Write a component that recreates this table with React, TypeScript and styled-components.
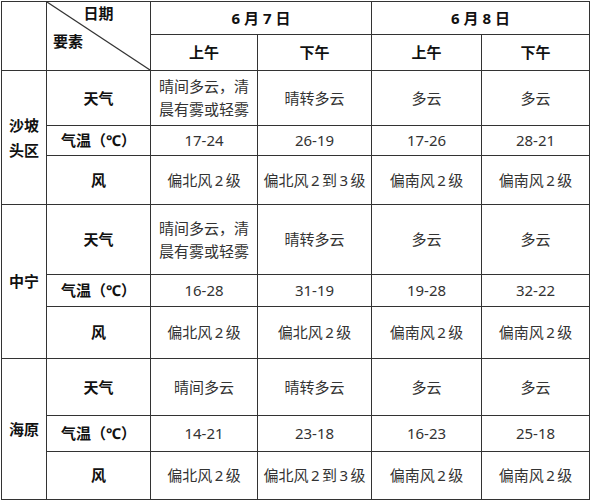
import React from "react";
import styled, { createGlobalStyle } from "styled-components";

const Global = createGlobalStyle`
  html, body { margin: 0; padding: 0; background: #fff; }
  body { font-family: "Noto Sans", "Noto Sans CJK SC", sans-serif; }
`;

const Wrap = styled.div`
  padding: 1px 0 0 1px;
`;

const Table = styled.table`
  border-collapse: collapse;
  table-layout: fixed;
  width: 588px;
  font-size: 15px;
  color: #333;
`;

const Cell = styled.td<{ $bold?: boolean }>`
  border: 1.5px solid #333;
  padding: 0;
  text-align: center;
  vertical-align: middle;
  line-height: 23px;
  font-weight: ${(p) => (p.$bold ? 700 : 400)};
  color: ${(p) => (p.$bold ? "#111" : "#333")};
`;

const Region = styled(Cell)`
  line-height: 25px;
`;

const CornerCell = styled(Cell)`
  position: relative;
`;

const Diagonal = styled.svg`
  position: absolute;
  inset: 0;
  width: 100%;
  height: 100%;
  pointer-events: none;
`;

const CornerLabels = styled.div`
  position: relative;
  display: flex;
  flex-direction: column;
  gap: 8px;
  padding-top: 1px;
  height: 68px;
  box-sizing: border-box;
  line-height: 20px;
  font-weight: 700;
  color: #111;
`;

const TopLabel = styled.span`
  align-self: center;
`;

const LeftLabel = styled.span`
  align-self: flex-start;
  padding-left: 6px;
`;

const Row = styled.tr<{ $h: number }>`
  height: ${(p) => p.$h}px;
`;

const widths = [45, 104, 107, 114, 110, 108];

type Block = {
  name: React.ReactNode;
  heights: [number, number, number];
  weather: string[];
  temp: string[];
  wind: string[];
};

const N = "\u2009";
const w2 = (d: string) => `偏${d}风${N}2${N}级`;
const w23 = `偏北风${N}2${N}到${N}3${N}级`;

const blocks: Block[] = [
  {
    name: (
      <>
        沙坡
        <br />
        头区
      </>
    ),
    heights: [55, 30, 49],
    weather: ["晴间多云，清晨有雾或轻雾", "晴转多云", "多云", "多云"],
    temp: ["17-24", "26-19", "17-26", "28-21"],
    wind: [w2("北"), w23, w2("南"), w2("南")],
  },
  {
    name: "中宁",
    heights: [70, 32, 52],
    weather: ["晴间多云，清晨有雾或轻雾", "晴转多云", "多云", "多云"],
    temp: ["16-28", "31-19", "19-28", "32-22"],
    wind: [w2("北"), w2("北"), w2("南"), w2("南")],
  },
  {
    name: "海原",
    heights: [57, 36, 48],
    weather: ["晴间多云", "晴转多云", "多云", "多云"],
    temp: ["14-21", "23-18", "16-23", "25-18"],
    wind: [w2("北"), w23, w2("南"), w2("南")],
  },
];

const Wrapped = styled.div`
  padding: 0 6px;
`;

export default function App() {
  return (
    <>
      <Global />
      <Wrap>
        <Table>
          <colgroup>
            {widths.map((w, i) => (
              <col key={i} style={{ width: w }} />
            ))}
          </colgroup>
          <tbody>
            <Row $h={33}>
              <Cell rowSpan={2} />
              <CornerCell rowSpan={2}>
                <Diagonal viewBox="0 0 100 100" preserveAspectRatio="none">
                  <line x1="0" y1="0" x2="100" y2="100" stroke="#333" strokeWidth="1.2" vectorEffect="non-scaling-stroke" />
                </Diagonal>
                <CornerLabels>
                  <TopLabel>日期</TopLabel>
                  <LeftLabel>要素</LeftLabel>
                </CornerLabels>
              </CornerCell>
              <Cell $bold colSpan={2}>6 月 7 日</Cell>
              <Cell $bold colSpan={2}>6 月 8 日</Cell>
            </Row>
            <Row $h={36}>
              <Cell $bold>上午</Cell>
              <Cell $bold>下午</Cell>
              <Cell $bold>上午</Cell>
              <Cell $bold>下午</Cell>
            </Row>
            {blocks.map((b, bi) => (
              <React.Fragment key={bi}>
                <Row $h={b.heights[0]}>
                  <Region $bold rowSpan={3}>{b.name}</Region>
                  <Cell $bold>天气</Cell>
                  {b.weather.map((t, i) => (
                    <Cell key={i}>
                      <Wrapped>{t}</Wrapped>
                    </Cell>
                  ))}
                </Row>
                <Row $h={b.heights[1]}>
                  <Cell $bold>气温（℃）</Cell>
                  {b.temp.map((t, i) => (
                    <Cell key={i}>{t}</Cell>
                  ))}
                </Row>
                <Row $h={b.heights[2]}>
                  <Cell $bold>风</Cell>
                  {b.wind.map((t, i) => (
                    <Cell key={i}>{t}</Cell>
                  ))}
                </Row>
              </React.Fragment>
            ))}
          </tbody>
        </Table>
      </Wrap>
    </>
  );
}
